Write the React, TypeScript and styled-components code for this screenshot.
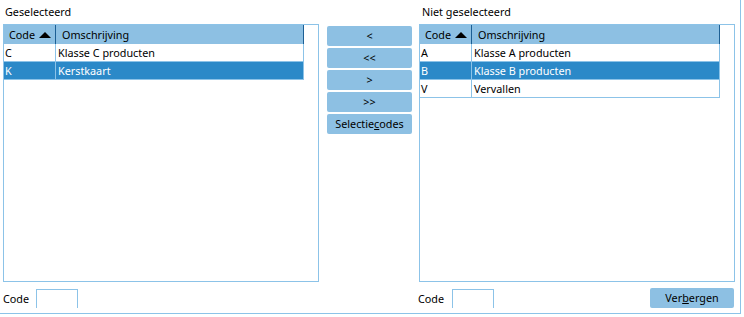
import React from "react";
import styled, { createGlobalStyle } from "styled-components";

const Global = createGlobalStyle`
  html, body { margin: 0; padding: 0; background: #ffffff; }
  body { font-family: "Noto Sans", "Liberation Sans", sans-serif; font-size: 10.8px; color: #000; }
`;

const BORDER = "#8cc3e8";
const HEAD = "#8dc0e3";
const SEL = "#2b89c8";
const DARK = "#1d5f94";

const Frame = styled.div`
  box-sizing: border-box;
  width: 741px;
  height: 314px;
  border-right: 1px solid ${BORDER};
  border-bottom: 1px solid ${BORDER};
  padding-left: 3px;
  display: flex;
  align-items: flex-start;
`;

const Panel = styled.div`
  width: 316px;
  display: flex;
  flex-direction: column;
`;

const Caption = styled.div<{ $indent: number }>`
  height: 24px;
  line-height: 24px;
  padding-left: ${(p) => p.$indent}px;
  box-sizing: border-box;
`;

const ListBox = styled.div`
  box-sizing: border-box;
  height: 258px;
  border: 1px solid ${BORDER};
  background: #fff;
`;

const Table = styled.div`
  width: 300px;
`;

const HeadRow = styled.div`
  display: flex;
  height: 19px;
  background: ${HEAD};
  border-right: 1px solid ${DARK};
  box-sizing: border-box;
`;

const HeadCell = styled.div<{ $w?: number; $pad: number }>`
  box-sizing: border-box;
  ${(p) => (p.$w ? `width: ${p.$w}px;` : "flex: 1;")}
  padding-left: ${(p) => p.$pad}px;
  line-height: 19px;
  display: flex;
  align-items: center;
  ${(p) => (p.$w ? `border-right: 1px solid ${DARK};` : "")}
`;

const SortArrow = styled.span`
  display: inline-block;
  width: 0;
  height: 0;
  margin-left: 4px;
  border-left: 6px solid transparent;
  border-right: 6px solid transparent;
  border-bottom: 6px solid #000;
`;

const Row = styled.div<{ $sel?: boolean }>`
  display: flex;
  height: 18px;
  box-sizing: border-box;
  border-right: 1px solid ${BORDER};
  border-bottom: 1px solid ${BORDER};
  background: ${(p) => (p.$sel ? SEL : "#fff")};
  color: ${(p) => (p.$sel ? "#fff" : "#000")};
`;

const Cell = styled.div<{ $w?: number; $pad: number }>`
  box-sizing: border-box;
  ${(p) => (p.$w ? `width: ${p.$w}px;` : "flex: 1;")}
  padding-left: ${(p) => p.$pad}px;
  line-height: 17px;
  white-space: nowrap;
  ${(p) => (p.$w ? `border-right: 1px solid ${BORDER};` : "")}
`;

const Footer = styled.div`
  display: flex;
  align-items: flex-start;
  justify-content: space-between;
  padding-top: 6px;
  padding-right: 1px;
`;

const CodeField = styled.div<{ $indent: number }>`
  display: flex;
  align-items: center;
  margin-left: ${(p) => p.$indent}px;
  margin-top: 1px;
`;

const CodeLabel = styled.span<{ $w: number }>`
  width: ${(p) => p.$w}px;
  line-height: 19px;
`;

const CodeInput = styled.div`
  box-sizing: border-box;
  width: 42px;
  height: 19px;
  border: 1px solid ${BORDER};
  border-bottom: none;
  background: #fff;
`;

const Middle = styled.div`
  width: 85px;
  margin: 26px 7px 0 8px;
  display: flex;
  flex-direction: column;
  gap: 2px;
`;

const Btn = styled.div<{ $w?: number }>`
  box-sizing: border-box;
  height: 20px;
  ${(p) => (p.$w ? `width: ${p.$w}px;` : "")}
  background: ${HEAD};
  border-radius: 2px;
  display: flex;
  align-items: center;
  justify-content: center;
  line-height: 20px;
  color: #000;
  u { text-decoration: underline; text-underline-offset: 1px; }
`;

type Item = { code: string; desc: string; sel?: boolean };

function ListTable({ items }: { items: Item[] }) {
  return (
    <Table>
      <HeadRow>
        <HeadCell $w={52} $pad={5}>
          Code<SortArrow />
        </HeadCell>
        <HeadCell $pad={6}>Omschrijving</HeadCell>
      </HeadRow>
      {items.map((it) => (
        <Row key={it.code} $sel={it.sel}>
          <Cell $w={52} $pad={1}>
            {it.code}
          </Cell>
          <Cell $pad={2}>{it.desc}</Cell>
        </Row>
      ))}
    </Table>
  );
}

export default function App() {
  return (
    <>
      <Global />
      <Frame>
        <Panel>
          <Caption $indent={2}>Geselecteerd</Caption>
          <ListBox>
            <ListTable
              items={[
                { code: "C", desc: "Klasse C producten" },
                { code: "K", desc: "Kerstkaart", sel: true },
              ]}
            />
          </ListBox>
          <Footer>
            <CodeField $indent={0}>
              <CodeLabel $w={33}>Code</CodeLabel>
              <CodeInput />
            </CodeField>
          </Footer>
        </Panel>
        <Middle>
          <Btn>&lt;</Btn>
          <Btn>&lt;&lt;</Btn>
          <Btn>&gt;</Btn>
          <Btn>&gt;&gt;</Btn>
          <Btn>
            <span>
              Selectie<u>c</u>odes
            </span>
          </Btn>
        </Middle>
        <Panel>
          <Caption $indent={3}>Niet geselecteerd</Caption>
          <ListBox>
            <ListTable
              items={[
                { code: "A", desc: "Klasse A producten" },
                { code: "B", desc: "Klasse B producten", sel: true },
                { code: "V", desc: "Vervallen" },
              ]}
            />
          </ListBox>
          <Footer>
            <CodeField $indent={-1}>
              <CodeLabel $w={34}>Code</CodeLabel>
              <CodeInput />
            </CodeField>
            <Btn $w={84}>
              <span>
                Ver<u>b</u>ergen
              </span>
            </Btn>
          </Footer>
        </Panel>
      </Frame>
    </>
  );
}
